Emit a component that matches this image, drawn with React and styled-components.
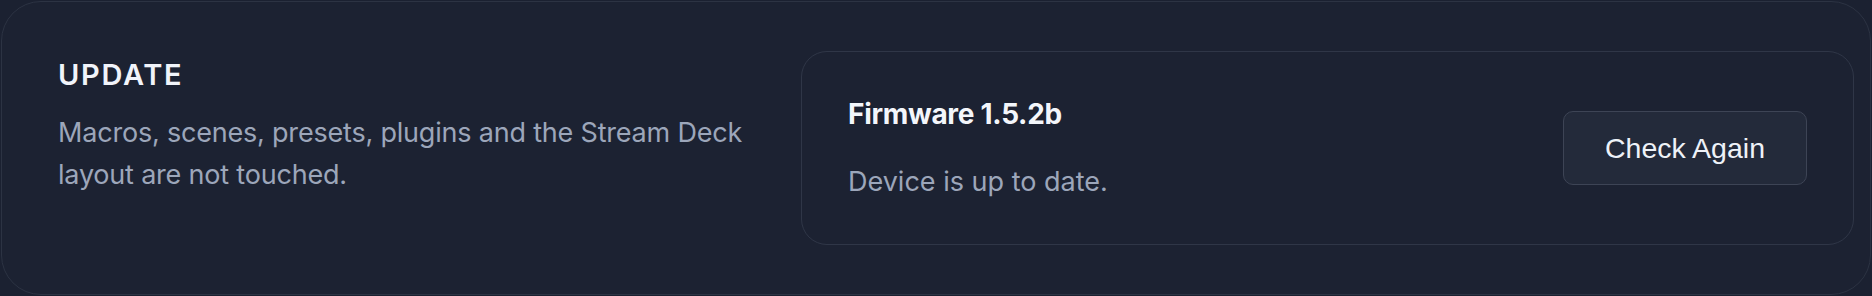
import React from "react";
import styled, { createGlobalStyle } from "styled-components";

const GlobalStyle = createGlobalStyle`
  html, body {
    margin: 0;
    padding: 0;
    background: #1b2131;
  }
  body {
    font-family: Inter, "Noto Sans", sans-serif;
  }
`;

const Page = styled.div`
  padding: 1px;
`;

/* outer panel holding the whole section */
const Panel = styled.section`
  box-sizing: border-box;
  width: 1870px;
  height: 294px;
  display: flex;
  align-items: center;
  gap: 48px;
  padding: 49px 16px 49px 56px;
  background: #1c2232;
  border: 1px solid #2c3343;
  border-radius: 40px;
`;

const Intro = styled.div`
  flex: 0 0 695px;
  align-self: flex-start;
  padding-top: 6px;
`;

const Heading = styled.h2`
  margin: 0;
  font-size: 29px;
  font-weight: 600;
  letter-spacing: 1.7px;
  color: #f1f4fa;
  line-height: 35px;
`;

const Description = styled.p`
  margin: 20px 0 0;
  font-size: 27px;
  letter-spacing: -0.2px;
  line-height: 42px;
  color: #9ca6ba;
`;

/* inner card with firmware status */
const StatusCard = styled.div`
  box-sizing: border-box;
  flex: 1;
  height: 194px;
  display: flex;
  align-items: center;
  justify-content: space-between;
  padding: 0 46px;
  border: 1px solid #2f3647;
  border-radius: 26px;
`;

const StatusText = styled.div`
  display: flex;
  flex-direction: column;
  gap: 34px;
`;

const Version = styled.div`
  font-size: 28px;
  font-weight: 700;
  letter-spacing: -0.3px;
  line-height: 34px;
  color: #f3f6fb;
`;

const State = styled.div`
  font-size: 27px;
  line-height: 34px;
  color: #9ca6ba;
`;

const Button = styled.button`
  box-sizing: border-box;
  width: 244px;
  height: 74px;
  background: #232a3a;
  border: 1.5px solid #3d4455;
  border-radius: 10px;
  color: #eef2f8;
  font-family: "Liberation Sans", Arial, sans-serif;
  font-size: 28.5px;
  cursor: pointer;
`;

export default function App() {
  return (
    <Page>
      <GlobalStyle />
      <Panel>
        <Intro>
          <Heading>UPDATE</Heading>
          <Description>
            Macros, scenes, presets, plugins and the Stream Deck layout are not touched.
          </Description>
        </Intro>
        <StatusCard>
          <StatusText>
            <Version>Firmware 1.5.2b</Version>
            <State>Device is up to date.</State>
          </StatusText>
          <Button>Check Again</Button>
        </StatusCard>
      </Panel>
    </Page>
  );
}
